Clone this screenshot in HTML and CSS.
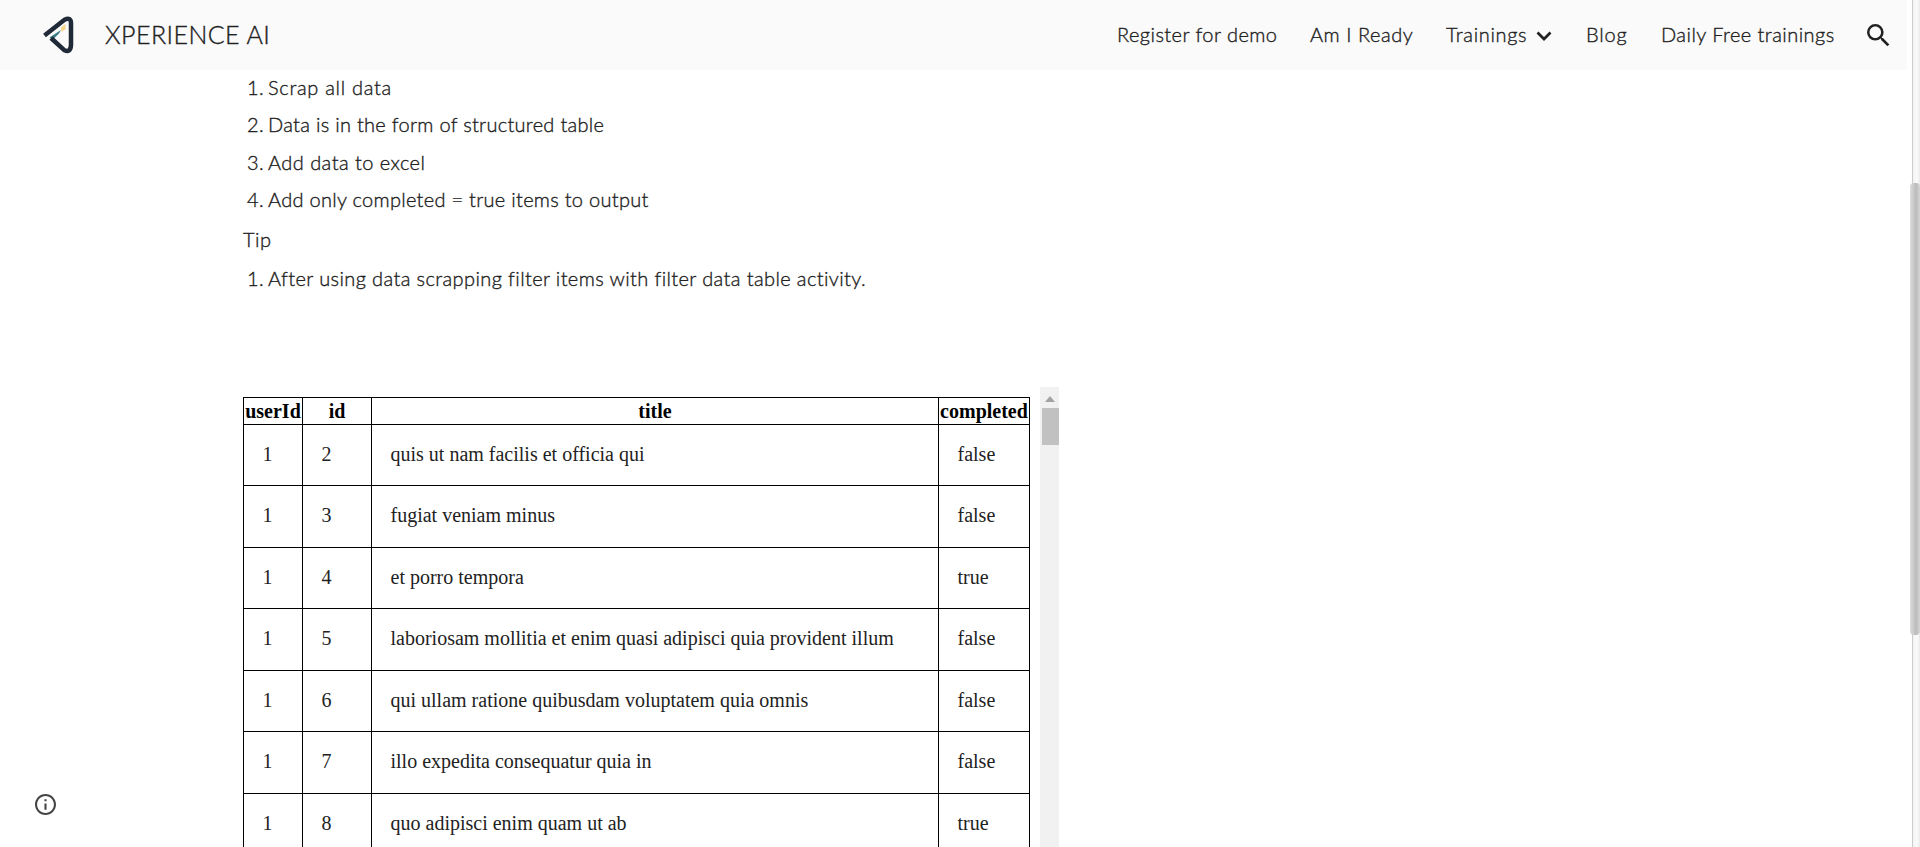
FILE: index.html
```
<!DOCTYPE html>
<html lang="en">
<head>
<meta charset="utf-8">
<title>XPERIENCE AI</title>
<link rel="stylesheet" href="styles.css">
</head>
<body>
<div class="page">
  <div class="main">
    <header class="topbar">
      <svg class="logo" viewBox="0 0 32 40" width="32" height="40">
        <path class="logo-yellow" d="M19 12.500L23.500 9V14L19.500 17Z"/>
        <path class="logo-teal" d="M7.500 22.500L19 15L17 18.500L11 24.500Z"/>
        <path class="logo-frame" d="M2.500 20.500L22.500 4.800Q28.800 1.800 29 8V30Q28.500 38 22.500 35.300L9 23"/>
      </svg>
      <span class="brand">XPERIENCE AI</span>
      <nav class="nav">
        <a class="link register">Register for demo</a>
        <a class="link ready">Am I Ready</a>
        <a class="link trainings">Trainings</a>
        <svg class="chevron" viewBox="0 0 16 12" width="16" height="12"><path d="M1.500 2.500L8 9L14.500 2.500"/></svg>
        <a class="link blog">Blog</a>
        <a class="link daily">Daily Free trainings</a>
        <svg class="search" viewBox="3 3 18 18" width="23" height="23"><path d="M15.500 14h-.79l-.28-.27A6.471 6.471 0 0 0 16 9.500 6.500 6.500 0 1 0 9.500 16c1.610 0 3.090-.59 4.230-1.570l.27.28v.79l5 4.990L20.490 19l-4.990-5zm-6 0C7.010 14 5 11.990 5 9.500S7.010 5 9.500 5 14 7.010 14 9.500 11.990 14 9.500 14z"/></svg>
      </nav>
    </header>
    <main class="content">
      <div class="item"><span class="num">1.</span><span class="wide">Scrap all data</span></div>
      <div class="item"><span class="num">2.</span><span class="tight">Data is in the form of structured table</span></div>
      <div class="item"><span class="num">3.</span><span>Add data to excel</span></div>
      <div class="item"><span class="num">4.</span><span class="tight">Add only completed = true items to output</span></div>
      <div class="tip">Tip</div>
      <div class="item"><span class="num">1.</span><span class="snug">After using data scrapping filter items with filter data table activity.</span></div>
      <div class="embed">
        <div class="table">
          <div class="row head"><b>userId</b><b>id</b><b>title</b><b>completed</b></div>
          <div class="row"><span>1</span><span>2</span><span>quis ut nam facilis et officia qui</span><span>false</span></div>
          <div class="row"><span>1</span><span>3</span><span>fugiat veniam minus</span><span>false</span></div>
          <div class="row"><span>1</span><span>4</span><span>et porro tempora</span><span>true</span></div>
          <div class="row"><span>1</span><span>5</span><span>laboriosam mollitia et enim quasi adipisci quia provident illum</span><span>false</span></div>
          <div class="row"><span>1</span><span>6</span><span>qui ullam ratione quibusdam voluptatem quia omnis</span><span>false</span></div>
          <div class="row"><span>1</span><span>7</span><span>illo expedita consequatur quia in</span><span>false</span></div>
          <div class="row"><span>1</span><span>8</span><span>quo adipisci enim quam ut ab</span><span>true</span></div>
        </div>
        <div class="scroll">
          <svg class="arrow" viewBox="0 0 10 6" width="10" height="6"><path d="M0 6L5 0L10 6Z"/></svg>
          <div class="grip"></div>
        </div>
      </div>
    </main>
  </div>
  <div class="pagescroll"><div class="pagegrip"></div></div>
  <svg class="info" viewBox="2 2 20 20" width="21" height="21"><path d="M11 7h2v2h-2zm0 4h2v6h-2zm1-9C6.480 2 2 6.480 2 12s4.480 10 10 10 10-4.480 10-10S17.520 2 12 2zm0 18c-4.410 0-8-3.590-8-8s3.590-8 8-8 8 3.590 8 8-3.590 8-8 8z"/></svg>
</div>
</body>
</html>
```
FILE: styles.css
```
* { box-sizing: border-box; }
body { margin: 0; background: #fff; color: #212121; font-family: Lato, sans-serif; font-size: 20px; font-weight: 300; letter-spacing: 0.45px; -webkit-text-stroke: 0.35px #212121; overflow: hidden; }
.page { display: flex; width: 1920px; height: 847px; overflow: hidden; }
.main { width: 1909px; height: 847px; overflow: hidden; }
.topbar { display: flex; align-items: center; height: 70px; width: 1907px; padding-left: 42px; background: #fafafa; }
.logo { flex: none; }
.logo-frame { fill: none; stroke: #1f2937; stroke-width: 4.500; stroke-linejoin: round; }
.logo-yellow { fill: #f5d58a; }
.logo-teal { fill: #397b86; }
.brand { margin-left: 31px; width: 200px; font-size: 25px; white-space: nowrap; padding-bottom: 2px; }
.nav { display: flex; align-items: center; margin-left: 812px; flex: none; }
.link { flex: none; white-space: nowrap; padding-bottom: 2px; }
.register { width: 193px; }
.ready { width: 136px; letter-spacing: 0.550px; }
.trainings { width: 90px; letter-spacing: 0.650px; }
.chevron { margin-right: 34px; margin-top: 2px; fill: none; stroke: #212121; stroke-width: 2.700; }
.blog { width: 75px; letter-spacing: 0.850px; }
.daily { width: 206px; }
.search { fill: #212121; }
.content { padding-left: 243px; }
.item { display: flex; height: 37.400px; line-height: 34px; white-space: nowrap; }
.num { width: 25px; padding-left: 4px; }
.wide { letter-spacing: 0.700px; }
.tight { letter-spacing: 0.290px; }
.snug { letter-spacing: 0.390px; }
.tip { height: 41px; line-height: 39px; }
.embed { display: flex; height: 460px; margin-top: 89px; font-family: "Liberation Serif", serif; font-weight: 400; letter-spacing: 0; -webkit-text-stroke: 0; color: #222; }
.table { width: 787px; margin-top: 10px; border-top: 1px solid #000; border-left: 1px solid #000; align-self: flex-start; }
.row { display: grid; grid-template-columns: 59px 69px 567px 91px; height: 61.500px; line-height: 59.500px; }
.row > * { border-right: 1px solid #000; border-bottom: 1px solid #000; padding-left: 18.500px; white-space: nowrap; }
.row.head { height: 27px; line-height: 26px; color: #000; }
.head > * { padding-left: 0; text-align: center; }
.scroll { width: 19px; margin-left: 10px; padding-top: 9px; background: #f1f1f1; }
.arrow { display: block; margin: 0 auto 6px 5px; fill: #a3a3a3; }
.grip { width: 17px; height: 37px; margin-left: 2px; background: #c1c1c1; }
.pagescroll { width: 8px; height: 847px; margin-left: 3px; padding-top: 183px; border-left: 1px solid #ccc; background: linear-gradient(90deg, #f4f4f4, #fafafa 60%, #eaeaea); }
.pagegrip { width: 10px; height: 452px; margin-left: -3px; border-radius: 4px; background: linear-gradient(90deg, #ddd, #bbb 60%, #d5d5d5); }
.info { position: absolute; left: 35px; top: 794px; fill: #444; }
```
